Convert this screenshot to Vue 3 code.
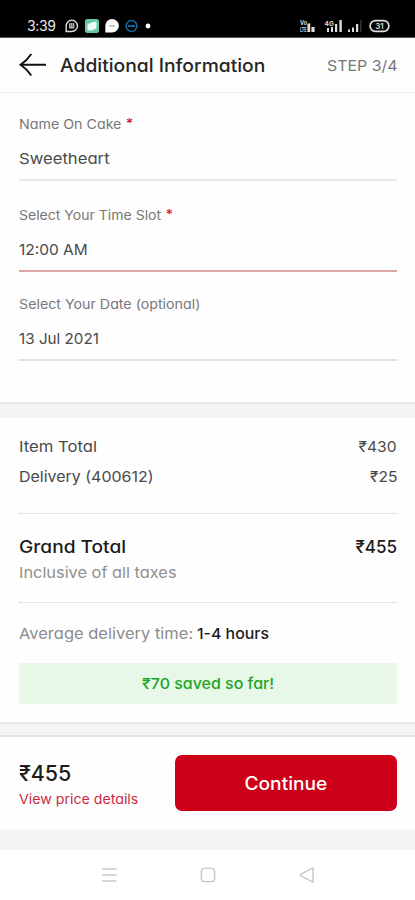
<script setup>
const fields = [
  { label: 'Name On Cake', required: true, value: 'Sweetheart', kind: 'name' },
  { label: 'Select Your Time Slot', required: true, value: '12:00 AM', kind: 'time' },
  { label: 'Select Your Date (optional)', required: false, value: '13 Jul 2021', kind: 'date' },
]
</script>

<template>
  <main class="screen">
    <div class="status">
      <span class="clock">3:39</span>
      <svg class="apps" width="88" height="16" viewBox="0 0 88 16">
        <path d="M3.2 13.5V7.9A5.6 5.6 0 1 1 8.8 13.5Z" fill="none" stroke="#ddd" stroke-width="1.4" />
        <rect x="6" y="5" width="5.4" height="5.4" rx="1" fill="#bbb" />
        <path d="M7.7 5v4M9.7 5v4" stroke="#333" stroke-width=".7" />
        <rect x="22" y="1" width="14" height="14" rx="2.5" fill="#67c9a4" />
        <path d="M25 6.5 29 5l4-1v6l-4 2h-4Z" fill="#eefbf5" stroke="#eefbf5" stroke-linejoin="round" />
        <path d="M42.3 14.6V8a6.8 6.8 0 1 1 6.8 6.6Z" fill="#fff" />
        <path d="M46.2 8h6" stroke="#999" stroke-width="1.1" />
        <circle cx="68.5" cy="8" r="5.4" fill="none" stroke="#176bab" stroke-width="1.5" />
        <path d="M65 8h7" stroke="#176bab" stroke-width="1.8" />
        <circle cx="85" cy="8" r="2.4" fill="#fff" />
      </svg>
      <svg class="signals" width="92" height="14" viewBox="0 0 92 14">
        <g fill="#ddd">
          <text x="0" y="6.4" class="tiny" textLength="7" lengthAdjust="spacingAndGlyphs">Vo</text>
          <text x="0" y="12.8" class="tiny" textLength="6.5" lengthAdjust="spacingAndGlyphs">LTE</text>
          <rect x="7.4" y="4.5" width="2.8" height="8.5" /><rect x="11.4" y="8" width="3.2" height="5" />
          <text x="24.5" y="6.8" class="tiny">4G</text>
          <rect x="27" y="9" width="2" height="4" /><rect x="31" y="8" width="2" height="5" />
          <rect x="35" y="5" width="2.2" height="8" /><rect x="39.4" y="1" width="2.4" height="12" />
          <rect x="48" y="10.5" width="2" height="2.5" /><rect x="52" y="8.5" width="2" height="4.5" />
          <rect x="56" y="5" width="2.2" height="8" />
        </g>
        <rect x="60" y="1" width="1.5" height="12" fill="#333" />
        <rect x="70.2" y="1.7" width="18.6" height="10.6" rx="5" fill="none" stroke="#ddd" stroke-width="1.7" />
        <text x="79.5" y="10" class="charge" text-anchor="middle" fill="#ddd">31</text>
      </svg>
    </div>

    <header class="bar">
      <svg class="back" width="28" height="24" viewBox="0 0 28 24">
        <path d="M27 11.8H1.5M12.3 1Q8 7.6 1.5 11.8 8 16 12.3 22.6" fill="none" stroke="#111" stroke-width="1.9" />
      </svg>
      <h1 class="title">Additional Information</h1>
      <span class="step">STEP 3/4</span>
    </header>

    <section class="form">
      <div v-for="f in fields" :key="f.kind" class="field" :class="f.kind">
        <div class="label"><span class="label-text">{{ f.label }}<span v-if="f.required" class="star">*</span></span></div>
        <div class="value">{{ f.value }}</div>
      </div>
    </section>

    <div class="gap"></div>

    <section class="bill">
      <div class="row"><span class="item">Item Total</span><span class="amount">₹430</span></div>
      <div class="row"><span class="delivery">Delivery (400612)</span><span class="amount">₹25</span></div>
      <div class="grand">
        <div class="total"><span class="total-label">Grand Total</span><span class="total-amount">₹455</span></div>
        <div class="tax">Inclusive of all taxes</div>
      </div>
      <div class="average"><span class="avg-label">Average delivery time:</span><span class="hours">1-4 hours</span></div>
      <div class="saved"><span class="saved-text">₹70 saved so far!</span></div>
    </section>

    <div class="thin-gap"></div>

    <footer class="checkout">
      <div class="summary">
        <div class="price">₹455</div>
        <div class="details">View price details</div>
      </div>
      <button class="continue"><span class="continue-text">Continue</span></button>
    </footer>
    <div class="base-gap"></div>
    <nav class="system">
      <svg width="16" height="16" viewBox="0 0 16 16"><path d="M1 2h14.5M1 8h14.5M1 14h14.5" stroke="#ccc" stroke-width="1.3" /></svg>
      <svg width="16" height="16" viewBox="0 0 16 16"><rect x="1.4" y="1.4" width="13.2" height="13.2" rx="3" fill="none" stroke="#c6c6c6" stroke-width="1.4" /></svg>
      <svg width="16" height="16" viewBox="0 0 16 16"><path d="M14 1.2v13.6Q14 15.4 13.4 15L1.6 8.5Q.9 8 1.6 7.5L13.4 1Q14 .6 14 1.2Z" fill="none" stroke="#c0c0c0" stroke-width="1.3" /></svg>
    </nav>
  </main>
</template>

<style>
body { margin: 0; background: #fff; }
</style>

<style scoped>
.screen { width: 415px; height: 900px; overflow: hidden; display: flex; flex-direction: column; background: #fefefe; color: #444; font-family: Inter, "Liberation Sans", sans-serif; font-feature-settings: "cv11"; white-space: nowrap; }
.screen > * { flex-shrink: 0; box-sizing: border-box; }
.status { height: 38px; background: #000; display: flex; align-items: flex-start; padding: 18px 23px 0 27px; border-bottom: 1px solid #555; }
.clock { width: 36px; font-size: 14px; line-height: 16px; color: #e8e8e8; letter-spacing: -.4px; }
.signals { margin: 1px 0 0 auto; }
.tiny { font-size: 6.5px; font-weight: 700; }
.charge { font-size: 8px; font-weight: 600; }
.bar { height: 55px; display: flex; align-items: center; padding: 0 18px 0 19px; border-bottom: 1px solid #ececec; }
.title { margin: 0 0 0 13px; font-size: 18px; font-weight: 450; color: #262626; transform: scaleX(1.07); transform-origin: left; }
.step { margin-left: auto; font-size: 15px; color: #777; transform: scaleX(1.06); transform-origin: right; }
.form { height: 309px; padding: 21px 18px 0 19px; }
.field { box-sizing: border-box; border-bottom: 2px solid #e8e8e8; }
.name { height: 67px; }
.time { height: 91px; padding-top: 24px; border-color: #dda5a5; }
.date { height: 89px; padding-top: 22px; border-color: #e0e0e0; }
.label { height: 20px; line-height: 20px; font-size: 13px; color: #777; }
.label-text { display: inline-block; transform: scaleX(1.095); transform-origin: left; }
.time .label-text { transform: scaleX(1.08); }
.star { position: relative; top: -1px; margin-left: 4px; color: #d9163a; font-weight: 600; line-height: 1; }
.value { display: table; margin-top: 15px; font-size: 15px; line-height: 20px; color: #4a4a4a; transform-origin: left; }
.name .value { transform: scaleX(1.11); }
.time .value { transform: scaleX(1.03); }
.date .value { transform: scaleX(1.015); }
.gap { height: 16px; background: #f4f4f4; border-top: 2px solid #e8e8e8; }
.bill { height: 304px; padding: 13px 18px 0 19px; }
.row { height: 30px; display: flex; align-items: center; justify-content: space-between; font-size: 15px; color: #4a4a4a; }
.item { transform: scaleX(1.11); transform-origin: left; }
.delivery { transform: scaleX(1.065); transform-origin: left; }
.amount { transform: scaleX(1.04); transform-origin: right; }
.grand { height: 90px; margin-top: 22px; box-sizing: border-box; border-top: 1px dotted #ccc; border-bottom: 1px dotted #ccc; padding-top: 21px; }
.total { display: flex; justify-content: space-between; font-size: 17px; line-height: 24px; font-weight: 500; color: #1c1c1c; }
.total-label { font-weight: 450; transform: scaleX(1.125); transform-origin: left; }
.tax { display: table; margin-top: 4px; font-size: 15px; line-height: 20px; color: #909090; transform: scaleX(1.09); transform-origin: left; }
.average { display: flex; margin-top: 21px; line-height: 20px; font-size: 15px; color: #8c8c8c; }
.avg-label { transform: scaleX(1.1); transform-origin: left; }
.hours { color: #1c1c1c; margin-left: 20px; font-weight: 450; transform: scaleX(1.06); transform-origin: left; }
.saved { height: 41px; margin-top: 19px; background: #e7f7e8; display: flex; align-items: center; justify-content: center; color: #20a526; font-size: 15px; font-weight: 500; }
.saved-text { transform: scaleX(1.065); }
.thin-gap { height: 15px; background: #f4f4f4; border-top: 2px solid #e8e8e8; border-bottom: 2px solid #e2e2e2; }
.checkout { height: 92px; display: flex; padding: 18px 18px 0 19px; justify-content: space-between; }
.price { display: table; margin-top: 6px; font-size: 21px; line-height: 26px; font-weight: 450; color: #1c1c1c; transform: scaleX(1.02); transform-origin: left; }
.details { display: table; font-size: 13px; line-height: 20px; margin-top: 2px; color: #ca2944; transform: scaleX(1.09); transform-origin: left; }
.continue { width: 222px; height: 56px; border: 0; border-radius: 7px; background: #ce0019; color: #fff; font: inherit; font-feature-settings: "cv11"; font-size: 18px; font-weight: 500; }
.continue-text { display: inline-block; transform: scaleX(1.065); }
.base-gap { height: 21px; background: #f4f4f4; }
.system { height: 50px; display: flex; justify-content: center; gap: 83px; padding-top: 17px; background: #fff; }
</style>
